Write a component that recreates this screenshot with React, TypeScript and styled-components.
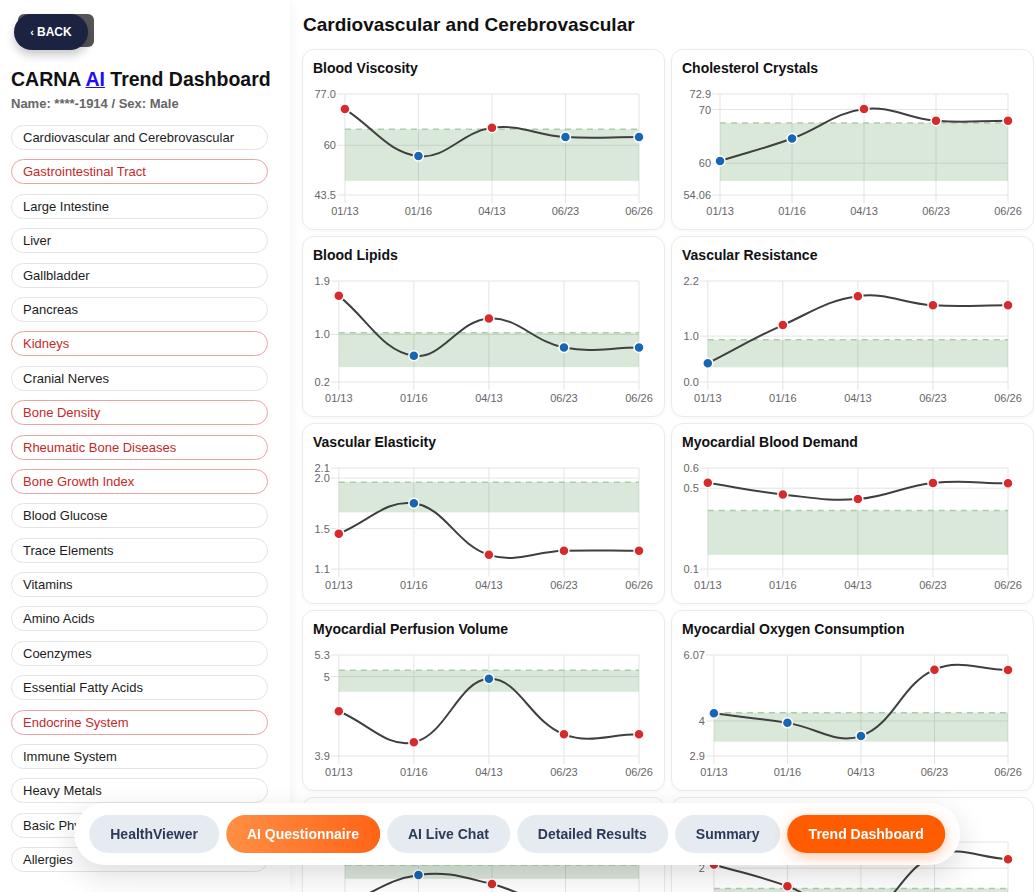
import React from 'react';
import styled, { createGlobalStyle } from 'styled-components';

const GlobalStyle = createGlobalStyle`
  * { box-sizing: border-box; }
  html, body {
    margin: 0;
    padding: 0;
    background: #fff;
  }
  body {
    font-family: 'Liberation Sans', Arial, sans-serif;
    color: #111;
  }
`;

interface Metric {
  title: string;
  ticks: string[]; // top to bottom, first = max, last = min
  band: [number, number];
  values: number[];
}

const DATES = ['01/13', '01/16', '04/13', '06/23', '06/26'];

const METRICS: Metric[] = [
  { title: 'Blood Viscosity', ticks: ['77.0', '60', '43.5'], band: [48.2, 65.3], values: [72.0, 56.4, 65.8, 62.7, 62.7] },
  { title: 'Cholesterol Crystals', ticks: ['72.9', '70', '60', '54.06'], band: [56.7, 67.5], values: [60.4, 64.6, 70.1, 67.9, 67.9] },
  { title: 'Blood Lipids', ticks: ['1.9', '1.0', '0.2'], band: [0.45, 1.03], values: [1.65, 0.64, 1.27, 0.78, 0.78] },
  { title: 'Vascular Resistance', ticks: ['2.2', '1.0', '0.0'], band: [0.32, 0.92], values: [0.41, 1.24, 1.87, 1.67, 1.67] },
  { title: 'Vascular Elasticity', ticks: ['2.1', '2.0', '1.5', '1.1'], band: [1.66, 1.96], values: [1.45, 1.75, 1.24, 1.28, 1.28] },
  { title: 'Myocardial Blood Demand', ticks: ['0.6', '0.5', '0.1'], band: [0.17, 0.39], values: [0.527, 0.469, 0.446, 0.526, 0.524] },
  { title: 'Myocardial Perfusion Volume', ticks: ['5.3', '5', '3.9'], band: [4.79, 5.09], values: [4.52, 4.09, 4.97, 4.2, 4.2] },
  { title: 'Myocardial Oxygen Consumption', ticks: ['6.07', '4', '2.9'], band: [3.35, 4.26], values: [4.24, 3.94, 3.53, 5.61, 5.6] },
  { title: 'Cerebral Blood Flow', ticks: ['61.5', '45', '38.2'], band: [53.0, 56.2], values: [47.0, 53.9, 51.8, 45.8, 46.4] },
  { title: 'Cerebral Arteriosclerosis', ticks: ['2.35', '2', '1.0'], band: [1.3, 1.73], values: [2.05, 1.76, 1.35, 2.17, 2.12] },
];

const MENU: { label: string; alert?: boolean }[] = [
  { label: 'Cardiovascular and Cerebrovascular' },
  { label: 'Gastrointestinal Tract', alert: true },
  { label: 'Large Intestine' },
  { label: 'Liver' },
  { label: 'Gallbladder' },
  { label: 'Pancreas' },
  { label: 'Kidneys', alert: true },
  { label: 'Cranial Nerves' },
  { label: 'Bone Density', alert: true },
  { label: 'Rheumatic Bone Diseases', alert: true },
  { label: 'Bone Growth Index', alert: true },
  { label: 'Blood Glucose' },
  { label: 'Trace Elements' },
  { label: 'Vitamins' },
  { label: 'Amino Acids' },
  { label: 'Coenzymes' },
  { label: 'Essential Fatty Acids' },
  { label: 'Endocrine System', alert: true },
  { label: 'Immune System' },
  { label: 'Heavy Metals' },
  { label: 'Basic Physical Index' },
  { label: 'Allergies' },
];

const NAV: { label: string; variant?: 'soft' | 'hot' }[] = [
  { label: 'HealthViewer' },
  { label: 'AI Questionnaire', variant: 'soft' },
  { label: 'AI Live Chat' },
  { label: 'Detailed Results' },
  { label: 'Summary' },
  { label: 'Trend Dashboard', variant: 'hot' },
];

/* ---------- chart ---------- */

const CHART_W = 361;
const CHART_H = 140;
const PLOT_TOP = 8;
const PLOT_BOTTOM = 109;
const PLOT_RIGHT = 336;

// rough 11px Arial widths, enough to size the y axis
const labelWidth = (s: string) =>
  [...s].reduce((w, c) => w + (c === '.' ? 3.06 : 6.12), 0);

type Pt = [number, number];

// cubic spline through the points, tension 0.4
const splinePath = (pts: Pt[], t = 0.4) => {
  const clampY = (y: number) => Math.min(PLOT_BOTTOM, Math.max(PLOT_TOP, y));
  const cps = pts.map((p, i) => {
    const prev = pts[i - 1] ?? p;
    const next = pts[i + 1] ?? p;
    const d01 = Math.hypot(p[0] - prev[0], p[1] - prev[1]);
    const d12 = Math.hypot(next[0] - p[0], next[1] - p[1]);
    const sum = d01 + d12 || 1;
    const fa = (t * d01) / sum;
    const fb = (t * d12) / sum;
    return {
      before: [p[0] - fa * (next[0] - prev[0]), clampY(p[1] - fa * (next[1] - prev[1]))],
      after: [p[0] + fb * (next[0] - prev[0]), clampY(p[1] + fb * (next[1] - prev[1]))],
    };
  });
  let d = `M${pts[0][0]},${pts[0][1]}`;
  for (let i = 1; i < pts.length; i++) {
    const a = cps[i - 1].after;
    const b = cps[i].before;
    d += ` C${a[0]},${a[1]} ${b[0]},${b[1]} ${pts[i][0]},${pts[i][1]}`;
  }
  return d;
};

const TrendChart: React.FC<{ metric: Metric }> = ({ metric }) => {
  const { ticks, band, values } = metric;
  const max = parseFloat(ticks[0]);
  const min = parseFloat(ticks[ticks.length - 1]);
  const widest = Math.max(...ticks.map(labelWidth));
  const left = 20.5 + widest;
  const step = (PLOT_RIGHT - left) / (DATES.length - 1);
  const y = (v: number) => PLOT_BOTTOM - ((v - min) / (max - min)) * (PLOT_BOTTOM - PLOT_TOP);
  const pts: Pt[] = values.map((v, i) => [left + i * step, y(v)]);
  const bandTop = y(band[1]);
  const bandBottom = y(band[0]);

  return (
    <svg width={CHART_W} height={CHART_H} style={{ display: 'block' }}>
      {ticks.map((tk) => {
        const ty = y(parseFloat(tk));
        return (
          <g key={tk}>
            <line x1={left - 8} x2={PLOT_RIGHT} y1={ty} y2={ty} stroke="#e4e4e4" strokeWidth={1} />
            <text x={left - 9} y={ty + 4} textAnchor="end" fontSize={11} fill="#666"
              fontFamily="'Liberation Sans', Arial, sans-serif">{tk}</text>
          </g>
        );
      })}
      {DATES.map((d, i) => {
        const tx = left + i * step;
        return (
          <g key={d}>
            <line x1={tx} x2={tx} y1={PLOT_TOP} y2={PLOT_BOTTOM + 8} stroke="#e4e4e4" strokeWidth={1} />
            <text x={tx} y={PLOT_BOTTOM + 20} textAnchor="middle" fontSize={11} fill="#666"
              fontFamily="'Liberation Sans', Arial, sans-serif">{d}</text>
          </g>
        );
      })}
      <rect x={left} y={bandTop} width={PLOT_RIGHT - left} height={bandBottom - bandTop}
        fill="rgba(72, 140, 72, 0.2)" />
      <line x1={left} x2={PLOT_RIGHT} y1={bandTop} y2={bandTop}
        stroke="#a9cda9" strokeWidth={1.5} strokeDasharray="6 5" />
      <path d={splinePath(pts)} fill="none" stroke="#3f3f3f" strokeWidth={2} />
      {pts.map((p, i) => {
        const inRange = values[i] >= band[0] && values[i] <= band[1];
        return (
          <circle key={i} cx={p[0]} cy={p[1]} r={5}
            fill={inRange ? '#1766b4' : '#d62a2c'} stroke="#fff" strokeWidth={1.5} />
        );
      })}
    </svg>
  );
};

/* ---------- layout ---------- */

const Page = styled.div`
  display: flex;
  height: 100vh;
  overflow: hidden;
`;

const Sidebar = styled.aside`
  flex: 0 0 290px;
  display: flex;
  flex-direction: column;
  padding: 14px 22px 40px 11px;
  overflow-y: auto;
  scrollbar-width: none;
  box-shadow: 2px 0 10px rgba(0, 0, 0, 0.04);
  z-index: 1;
  & > * { flex-shrink: 0; }
  &::-webkit-scrollbar { display: none; }
`;

const BackButton = styled.button`
  position: relative;
  align-self: flex-start;
  margin-left: 3px;
  width: 74px;
  height: 36px;
  border: none;
  border-radius: 18px;
  background: #1b2340;
  color: #fff;
  font-family: 'Liberation Sans', Arial, sans-serif;
  font-size: 12px;
  font-weight: 700;
  cursor: pointer;
  box-shadow: 0 5px 10px rgba(0, 0, 0, 0.22);

  /* the darker slab peeking out behind the pill */
  &::before {
    content: '';
    position: absolute;
    left: 4px;
    right: -6px;
    top: 0;
    bottom: 3px;
    background: #555;
    border-radius: 6px;
    z-index: -1;
  }

  span {
    font-size: 11px;
    margin-right: 3px;
  }
`;

const Title = styled.h1`
  margin: 17px 0 0;
  font-size: 19.5px;
  line-height: 24px;
  font-weight: 700;
  white-space: nowrap;
  color: #111;

  a {
    color: #1a0dff;
    text-decoration: underline;
  }
`;

const Subtitle = styled.div`
  margin-top: 5px;
  font-size: 13px;
  line-height: 16px;
  font-weight: 700;
  color: #666;
`;

const Menu = styled.nav`
  display: flex;
  flex-direction: column;
  gap: 9.4px;
  margin-top: 13px;
`;

const MenuItem = styled.button<{ $alert?: boolean }>`
  flex-shrink: 0;
  height: 25px;
  padding: 0 11px;
  text-align: left;
  background: #fff;
  border: 1px solid ${(p) => (p.$alert ? '#eaa4a4' : '#e3e3e3')};
  border-radius: 13px;
  color: ${(p) => (p.$alert ? '#c62828' : '#1c1c1c')};
  font-family: 'Liberation Sans', Arial, sans-serif;
  font-size: 13px;
  white-space: nowrap;
  overflow: hidden;
  cursor: pointer;
`;

const Main = styled.main`
  flex: 1;
  padding: 14px 0 120px 12px;
  overflow-y: auto;
  scrollbar-width: none;
  &::-webkit-scrollbar { display: none; }
`;

const Heading = styled.h2`
  margin: 0 0 13px 1px;
  font-size: 19px;
  line-height: 22px;
  font-weight: 700;
  color: #111;
`;

const Grid = styled.div`
  display: grid;
  grid-template-columns: 1fr 1fr;
  gap: 6px;
`;

const Card = styled.section`
  height: 181px;
  padding-top: 9px;
  background: #fff;
  border: 1px solid #ebebeb;
  border-radius: 12px;
  box-shadow: 0 1px 4px rgba(0, 0, 0, 0.04);
  overflow: hidden;
`;

const CardTitle = styled.h3`
  margin: 0 0 9px 10px;
  font-size: 14px;
  line-height: 18px;
  font-weight: 700;
  color: #111;
`;

const BottomNav = styled.div`
  position: fixed;
  left: 50%;
  bottom: 27px;
  transform: translateX(-50%);
  display: flex;
  gap: 7px;
  padding: 12px 15px;
  background: #fff;
  border-radius: 31px;
  box-shadow: 0 10px 30px rgba(0, 0, 0, 0.14);
  z-index: 10;
`;

const NavButton = styled.button<{ $variant?: 'soft' | 'hot' }>`
  height: 38px;
  padding: 0 21px;
  border: none;
  border-radius: 19px;
  font-family: 'Liberation Sans', Arial, sans-serif;
  font-size: 14px;
  font-weight: 700;
  white-space: nowrap;
  cursor: pointer;
  color: ${(p) => (p.$variant ? '#fff' : '#2c3a57')};
  background: ${(p) =>
    p.$variant === 'hot'
      ? '#ff5c00'
      : p.$variant === 'soft'
        ? 'linear-gradient(90deg, #ff8f45, #ff6416)'
        : '#e6eaf1'};
  box-shadow: ${(p) => (p.$variant === 'hot' ? '0 4px 14px rgba(255, 92, 0, 0.35)' : 'none')};
`;

export default function App() {
  return (
    <>
      <GlobalStyle />
      <Page>
        <Sidebar>
          <BackButton><span>‹</span>BACK</BackButton>
          <Title>
            CARNA <a href="#">AI</a> Trend Dashboard
          </Title>
          <Subtitle>Name: ****-1914 / Sex: Male</Subtitle>
          <Menu>
            {MENU.map((m) => (
              <MenuItem key={m.label} $alert={m.alert}>{m.label}</MenuItem>
            ))}
          </Menu>
        </Sidebar>
        <Main>
          <Heading>Cardiovascular and Cerebrovascular</Heading>
          <Grid>
            {METRICS.map((m) => (
              <Card key={m.title}>
                <CardTitle>{m.title}</CardTitle>
                <TrendChart metric={m} />
              </Card>
            ))}
          </Grid>
        </Main>
      </Page>
      <BottomNav>
        {NAV.map((n) => (
          <NavButton key={n.label} $variant={n.variant}>{n.label}</NavButton>
        ))}
      </BottomNav>
    </>
  );
}
